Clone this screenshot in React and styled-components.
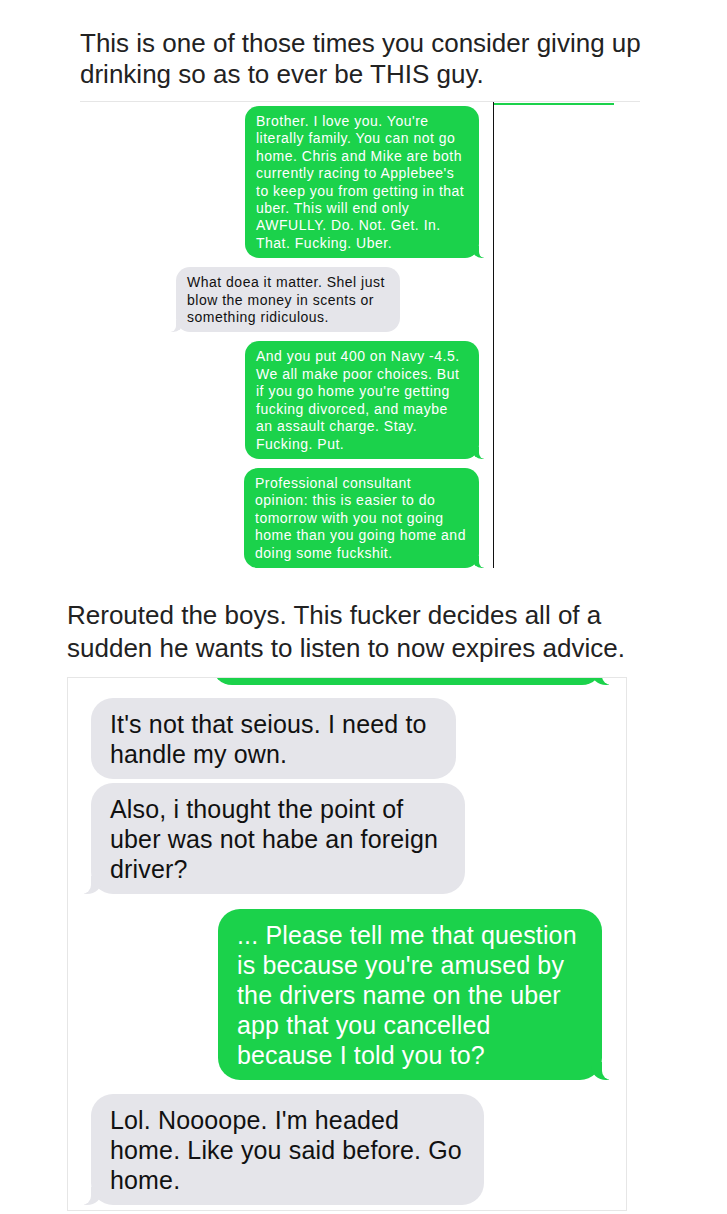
import React from "react";
import styled, { createGlobalStyle, css } from "styled-components";

const GREEN = "#1bd24b";
const GRAY = "#e5e5ea";

const GlobalStyle = createGlobalStyle`
    body {
        margin: 0;
        background: #ffffff;
        font-family: "Liberation Sans", Arial, sans-serif;
    }
`;

const Page = styled.div`
    display: flex;
    flex-direction: column;
    width: 727px;
    padding-bottom: 4px;
`;

const Caption = styled.p`
    margin: 0;
    margin-left: ${(p) => p.$left}px;
    padding-top: ${(p) => p.$top}px;
    font-size: 26px;
    line-height: ${(p) => p.$lh}px;
    color: #222;
`;

/* first screenshot: clipped, with a black edge on its right */
const ShotOne = styled.div`
    display: flex;
    align-items: flex-start;
    width: 560px;
    margin: 11px 0 0 80px;
    border-top: 1px solid #e6e6e6;
`;

const ThreadOne = styled.div`
    display: flex;
    flex-direction: column;
    gap: 9px;
    width: 303px;
    padding: 4px 14px 0 96px;
    border-right: 1px solid #111;
`;

const GreenEdge = styled.div`
    width: 120px;
    height: 2px;
    margin-top: 1px;
    background: ${GREEN};
`;

/* second screenshot, framed */
const ShotTwo = styled.div`
    display: flex;
    flex-direction: column;
    width: 560px;
    height: 534px;
    margin: 12px 0 0 67px;
    padding: 0 24px 0 23px;
    box-sizing: border-box;
    border: 1px solid #e6e6e6;
    overflow: hidden;
`;

const tail = (size) => css`
    &::before {
        content: "";
        position: absolute;
        bottom: 0;
        height: ${size * 2}px;
        width: ${size * 2}px;
        background: inherit;
    }
    &::after {
        content: "";
        position: absolute;
        bottom: 0;
        width: ${size}px;
        height: ${size * 2}px;
        background: #fff;
    }
`;

const Bubble = styled.div`
    position: relative;
    box-sizing: border-box;
    width: ${(p) => p.$w}px;
    align-self: ${(p) => (p.$me ? "flex-end" : "flex-start")};
    margin-top: ${(p) => p.$mt || 0}px;
    padding: ${(p) => (p.$big ? "11px 19px 10px" : "7px 11px 6px")};
    border-radius: ${(p) => (p.$big ? 22 : 14)}px;
    background: ${(p) => (p.$me ? GREEN : GRAY)};
    color: ${(p) => (p.$me ? "#fff" : "#111")};
    font-size: ${(p) => (p.$big ? 25 : 14)}px;
    letter-spacing: ${(p) => (p.$big ? 0.15 : 0.5)}px;
    line-height: ${(p) => (p.$big ? 30 : 17.4)}px;
    white-space: nowrap;
    ${(p) => p.$tail && tail(p.$big ? 9 : 6)}
    ${(p) =>
        p.$tail &&
        (p.$me
            ? css`
                  &::before {
                      right: ${p.$big ? -7 : -5}px;
                      border-bottom-left-radius: ${p.$big ? "15px 14px" : "10px 9px"};
                  }
                  &::after {
                      right: ${p.$big ? -9 : -6}px;
                      border-bottom-left-radius: ${p.$big ? 9 : 6}px;
                  }
              `
            : css`
                  &::before {
                      left: ${p.$big ? -7 : -5}px;
                      border-bottom-right-radius: ${p.$big ? "15px 14px" : "10px 9px"};
                  }
                  &::after {
                      left: ${p.$big ? -9 : -6}px;
                      border-bottom-right-radius: ${p.$big ? 9 : 6}px;
                  }
              `)}
`;

const Text = styled.span`
    position: relative;
    z-index: 1;
`;

const Peek = styled(Bubble)`
    height: 40px;
    flex: none;
`;

const shotOne = [
    {
        me: true,
        w: 234,
        lines: [
            "Brother. I love you. You're",
            "literally family. You can not go",
            "home. Chris and Mike are both",
            "currently racing to Applebee's",
            "to keep you from getting in that",
            "uber. This will end only",
            "AWFULLY. Do. Not. Get. In.",
            "That. Fucking. Uber.",
        ],
    },
    {
        me: false,
        w: 224,
        lines: [
            "What doea it matter. Shel just",
            "blow the money in scents or",
            "something ridiculous.",
        ],
    },
    {
        me: true,
        w: 234,
        lines: [
            "And you put 400 on Navy -4.5.",
            "We all make poor choices. But",
            "if you go home you're getting",
            "fucking divorced, and maybe",
            "an assault charge. Stay.",
            "Fucking. Put.",
        ],
    },
    {
        me: true,
        w: 235,
        lines: [
            "Professional consultant",
            "opinion: this is easier to do",
            "tomorrow with you not going",
            "home than you going home and",
            "doing some fuckshit.",
        ],
    },
];

const shotTwo = [
    {
        me: false,
        w: 365,
        mt: 13,
        tail: false,
        lines: ["It's not that seious. I need to", "handle my own."],
    },
    {
        me: false,
        w: 374,
        mt: 4,
        tail: true,
        lines: [
            "Also, i thought the point of",
            "uber was not habe an foreign",
            "driver?",
        ],
    },
    {
        me: true,
        w: 384,
        mt: 15,
        tail: true,
        lines: [
            "... Please tell me that question",
            "is because you're amused by",
            "the drivers name on the uber",
            "app that you cancelled",
            "because I told you to?",
        ],
    },
    {
        me: false,
        w: 393,
        mt: 14,
        tail: true,
        lines: [
            "Lol. Noooope. I'm headed",
            "home. Like you said before. Go",
            "home.",
        ],
    },
];

const Lines = ({ lines }) => (
    <Text>
        {lines.map((line, i) => (
            <React.Fragment key={i}>
                {i > 0 && <br />}
                {line}
            </React.Fragment>
        ))}
    </Text>
);

const App = () => {
    return (
        <Page>
            <GlobalStyle />
            <Caption $left={80} $top={28} $lh={31}>
                This is one of those times you consider giving up
                <br />
                drinking so as to ever be THIS guy.
            </Caption>
            <ShotOne>
                <ThreadOne>
                    {shotOne.map((b, i) => (
                        <Bubble key={i} $me={b.me} $w={b.w} $tail>
                            <Lines lines={b.lines} />
                        </Bubble>
                    ))}
                </ThreadOne>
                <GreenEdge />
            </ShotOne>
            <Caption $left={67} $top={31} $lh={33}>
                Rerouted the boys. This fucker decides all of a
                <br />
                sudden he wants to listen to now expires advice.
            </Caption>
            <ShotTwo>
                <Peek $me $big $w={390} $mt={-33} $tail />
                {shotTwo.map((b, i) => (
                    <Bubble key={i} $me={b.me} $w={b.w} $mt={b.mt} $big $tail={b.tail}>
                        <Lines lines={b.lines} />
                    </Bubble>
                ))}
            </ShotTwo>
        </Page>
    );
};

export default App;
